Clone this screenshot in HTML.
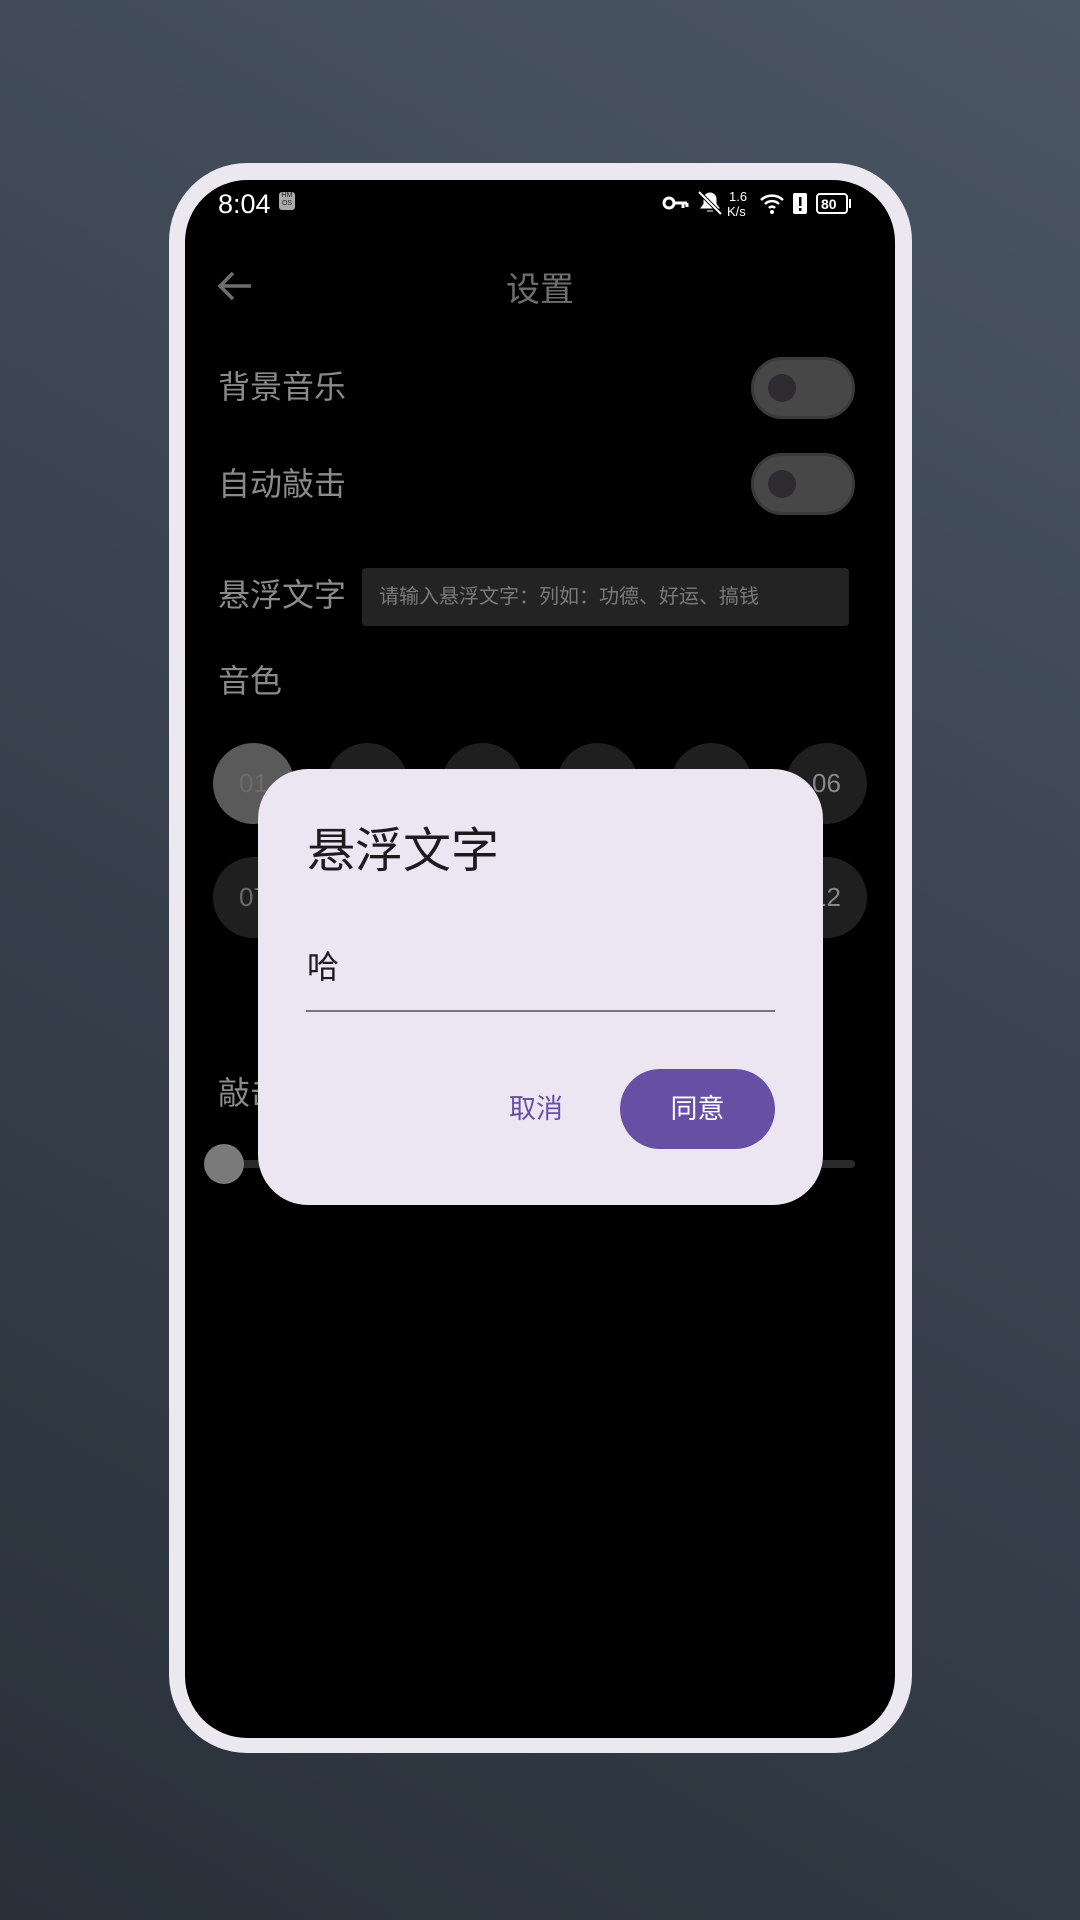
<!DOCTYPE html>
<html><head><meta charset="utf-8"><style>
*{margin:0;padding:0;box-sizing:border-box}
body{width:1080px;height:1920px;overflow:hidden;background:linear-gradient(30deg,#29303a 0%,#3a4450 55%,#4b5664 100%);font-family:"Liberation Sans","Noto Sans CJK SC",sans-serif;position:relative}
.frame{position:absolute;left:169px;top:163px;width:743px;height:1590px;background:#ebe8f0;border-radius:78px}
.screen{position:absolute;left:185px;top:180px;width:710px;height:1558px;background:#000;border-radius:62px;overflow:hidden}
.a{position:absolute}
.lbl{position:absolute;left:33px;font-size:32px;color:#8a8a8a;line-height:1}
.tog{position:absolute;left:566px;width:104px;height:62px;border-radius:31px;background:#474747;border:3px solid #3a3a3a}
.tog i{position:absolute;left:14px;top:14px;width:28px;height:28px;border-radius:50%;background:#2e2c30}
.c{position:absolute;width:81px;height:81px;border-radius:50%;background:#1f1f1f;color:#6a6a6a;font-size:26px;text-align:center;line-height:81px}
</style></head><body>
<div class="frame"></div>
<div class="screen">
 <div class="a" style="left:33px;top:10px;color:#fff;font-size:27px;line-height:28px">8:04</div>
 <div class="a" style="left:94px;top:12px;width:16px;height:18px;background:#aaa;border-radius:3px;font-size:7px;color:#222;text-align:center;line-height:8px">HM<br>OS</div>
 <svg class="a" style="left:476px;top:8px" width="230" height="30" viewBox="0 0 230 30">
  <circle cx="8" cy="15" r="5" fill="none" stroke="#fff" stroke-width="3"/><path d="M13 15h13M22 15v5M26 15v4" stroke="#fff" stroke-width="3"/>
  <path d="M40 20h18l-3-4v-5a6 6 0 0 0-12 0v5z M46 23h6" fill="#fff" stroke="#fff" stroke-width="1"/><path d="M38 4l22 22" stroke="#000" stroke-width="4"/><path d="M38 4l22 22" stroke="#fff" stroke-width="2"/>
  <text x="68" y="13" font-size="13" fill="#fff" font-family="Liberation Sans">1.6</text><text x="66" y="28" font-size="13" fill="#fff" font-family="Liberation Sans">K/s</text>
  <path d="M100 12a16 16 0 0 1 22 0M104 16a10 10 0 0 1 14 0M108 20a4 4 0 0 1 6 0" stroke="#fff" stroke-width="2.5" fill="none"/><circle cx="111" cy="24" r="2" fill="#fff"/>
  <rect x="132" y="5" width="14" height="21" rx="2" fill="#fff"/><rect x="138" y="9" width="2.5" height="9" fill="#000"/><rect x="138" y="20" width="2.5" height="3" fill="#000"/>
  <rect x="156" y="6" width="30" height="19" rx="3" fill="none" stroke="#fff" stroke-width="2"/><rect x="188" y="11" width="2" height="9" fill="#fff"/>
  <text x="160" y="21" font-size="14" fill="#fff" font-weight="bold" font-family="Liberation Sans">80</text>
 </svg>
 <svg class="a" style="left:32px;top:90px" width="36" height="32" viewBox="0 0 36 32"><path d="M34 16H4M16 3L3 16l13 13" stroke="#6e6e6e" stroke-width="3.5" fill="none"/></svg>
 <div class="a" style="left:0;width:710px;top:82px;text-align:center;color:#6e6e6e;font-size:34px">设置</div>
 <div class="lbl" style="top:191px">背景音乐</div>
 <div class="tog" style="top:177px"><i></i></div>
 <div class="lbl" style="top:288px">自动敲击</div>
 <div class="tog" style="top:273px"><i></i></div>
 <div class="lbl" style="top:399px">悬浮文字</div>
 <div class="a" style="left:177px;top:388px;width:487px;height:58px;background:#232323;border-radius:4px;color:#7a7a7a;font-size:20px;line-height:58px;padding-left:17px">请输入悬浮文字：列如：功德、好运、搞钱</div>
 <div class="lbl" style="top:485px">音色</div>
 <div class="c" style="left:28px;top:563px;background:#5a5a5a">01</div>
 <div class="c" style="left:142px;top:563px">02</div>
 <div class="c" style="left:257px;top:563px">03</div>
 <div class="c" style="left:372px;top:563px">04</div>
 <div class="c" style="left:486px;top:563px">05</div>
 <div class="c" style="left:601px;top:563px;color:#888">06</div>
 <div class="c" style="left:28px;top:677px">07</div>
 <div class="c" style="left:142px;top:677px">08</div>
 <div class="c" style="left:257px;top:677px">09</div>
 <div class="c" style="left:372px;top:677px">10</div>
 <div class="c" style="left:486px;top:677px">11</div>
 <div class="c" style="left:601px;top:677px;color:#888">12</div>
 <div class="lbl" style="top:897px">敲击音量</div>
 <div class="a" style="left:39px;top:980px;width:631px;height:8px;background:#2a2a2a;border-radius:4px"></div>
 <div class="a" style="left:19px;top:964px;width:40px;height:40px;border-radius:50%;background:#7a7a7a"></div>
 <div class="a" style="left:73px;top:589px;width:565px;height:436px;background:#ece6f3;border-radius:50px">
  <div class="a" style="left:49px;top:42px;font-size:48px;color:#1d1b20">悬浮文字</div>
  <div class="a" style="left:49px;top:173px;font-size:32px;color:#1d1b20">哈</div>
  <div class="a" style="left:48px;top:241px;width:469px;height:2px;background:#79747e"></div>
  <div class="a" style="left:238px;top:320px;width:80px;font-size:27px;color:#6750a4;text-align:center;line-height:40px">取消</div>
  <div class="a" style="left:362px;top:300px;width:155px;height:80px;border-radius:40px;background:#6750a4;color:#fff;font-size:27px;text-align:center;line-height:80px">同意</div>
 </div>
</div>
</body></html>
